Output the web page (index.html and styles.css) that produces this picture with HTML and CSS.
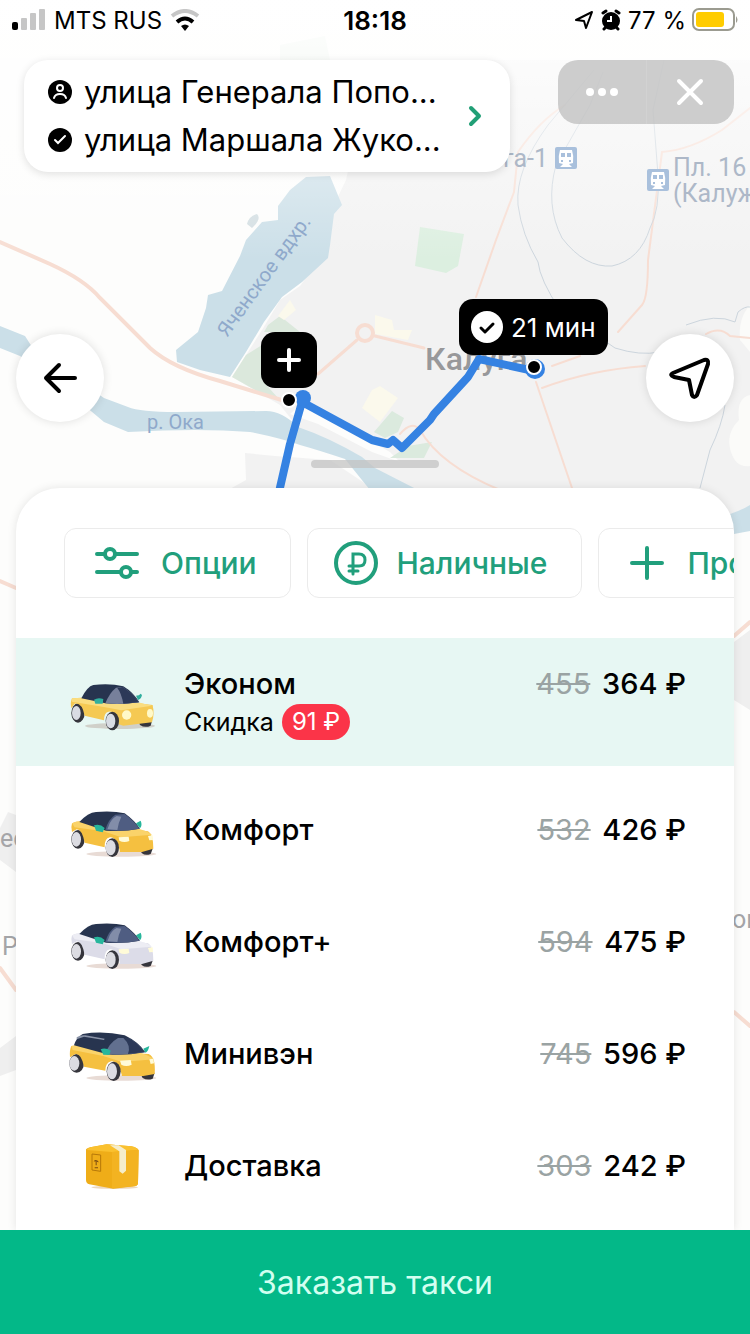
FILE: index.html
```html
<!DOCTYPE html>
<html lang="ru">
<head>
    <meta charset="UTF-8">
    <meta name="viewport" content="width=device-width, initial-scale=1.0">
    <title>Заказать такси</title>
    <link rel="stylesheet" href="styles.css">
</head>
<body>
    <div class="screen">
        <!-- Map -->
        <div class="map">
            <svg class="map-canvas" viewBox="0 0 750 1334" preserveAspectRatio="xMidYMin slice" aria-hidden="true">
                <defs>
                    <linearGradient id="topFade" x1="0" y1="0" x2="0" y2="1">
                        <stop offset="0" stop-color="#fff" stop-opacity="0.95"/>
                        <stop offset="0.5" stop-color="#fff" stop-opacity="0.5"/>
                        <stop offset="1" stop-color="#fff" stop-opacity="0"/>
                    </linearGradient>
                </defs>
                <rect width="750" height="1334" fill="#fdfdfc"/>
                <!-- city area -->
                <path fill="#f2f2f2" d="M372 60H750V508L730 514L700 500H398L370 470L340 448L300 430L280 405L232 377L262 330L280 300L300 286L328 248L334 205L346 180Z"/>
                <path fill="#f2f2f2" d="M245 453L275 456L330 460L375 490H228L246 480Z"/>
                <path fill="#fdfdfc" d="M300 405L330 418L390 452L400 462L372 452L318 424L290 414Z"/>
                <path fill="#fbfbf9" d="M750 305Q738 318 740 340Q750 352 750 352ZM750 395Q736 398 739 420Q725 434 731 452Q736 468 750 466Z"/>
                <!-- parks -->
                <path fill="#dcefe0" d="M420 227L464 234L458 266L446 273L415 266Z"/>
                <path fill="#dbe8dc" d="M232 377L246 355L262 345V380L278 398L262 394Z"/>
                <path fill="#dbe8dc" d="M268 325L280 316L300 332H264Z"/>
                <path fill="#fbf9ec" d="M290 300L296 310L284 320L278 316ZM375 315L392 320L394 330L412 330L408 340L375 334ZM372 390L380 386L398 398L380 422L362 408Z"/>
                <path fill="#dbeade" d="M392 411L404 418L398 432L385 438L374 432ZM408 446L432 442L424 458H390Z"/>
                <path fill="#eaf3ea" d="M280 45L325 36L330 60H280Z"/>
                <!-- reservoir -->
                <path fill="#cbdfe8" d="M306 177L330 176L342 205L334 214L330 245L328 258L302 282L282 297L264 322L246 352L230 377L200 370L177 362L176 350L198 332L206 308L208 295L222 291L240 256L246 240L262 222L278 220L278 206L290 190Z"/>
                <path fill="#d3dee2" d="M247 224Q249 216 257 214Q262 219 252 228Z"/>
                <!-- Oka river -->
                <path fill="#cbdfe8" d="M0 326L25 336L34 350L104 398L128 407Q140 412 176 412L266 411Q282 411 298 427Q330 438 362 457L375 468L418 490H370L345 459Q318 450 300 445Q280 438 250 432Q200 428 128 432L104 422L60 385L20 356L0 348Z"/>
                <path fill="#cbdfe8" d="M730 514Q742 510 750 505V531L734 534Z"/>
                <!-- roads -->
                <g fill="none" stroke="#f7ddd2" stroke-width="4" stroke-linecap="round">
                    <path d="M0 242L50 264Q85 280 100 298L150 348Q172 368 220 381L288 402"/>
                    <path stroke-width="3" d="M318 374L357 340M375 336L424 348"/>
                    <circle cx="365" cy="333" r="8"/>
                    <path stroke-width="2" d="M476 297L496 240L514 192L518 152Q540 120 565 105M536 382L572 488M542 388Q590 370 645 366M552 366L580 356M618 332L642 305Q648 298 648 260L662 152Q690 150 722 130L750 108M400 434Q412 420 420 430Q440 465 500 490M706 334Q720 326 730 336L750 338"/>
                    <path d="M0 581L16 588M734 636L750 622M734 1012L750 1026M0 968L16 990"/>
                </g>
                <!-- railways -->
                <g fill="none" stroke="#ccd5dd" stroke-width="1">
                    <path d="M594 70L548 125Q515 170 518 205Q522 235 538 262Q540 280 560 310L615 348Q640 356 660 352"/>
                    <path d="M603 72L590 105L556 165Q545 205 562 238Q585 268 612 266Q640 260 650 228Q660 210 658 175L653 110L664 60"/>
                    <path d="M725 405Q722 425 710 450L700 488M686 325Q716 313 735 322L738 312Q745 306 750 307"/>
                </g>
                <!-- outskirts seen beside the sheet -->
                <path fill="#efefef" d="M734 642L750 630V710L734 700ZM0 828L8 812L16 815V872L0 860ZM0 1048L16 1036V1070L0 1076Z"/>
                <rect width="750" height="260" fill="url(#topFade)"/>
                <g class="map-label">
                    <text x="503" y="167">га-1</text>
                    <text x="673" y="176">Пл. 16</text>
                    <text x="673" y="202">(Калуж</text>
                    <text class="water" transform="translate(227 338) rotate(-54)">Яченское вдхр.</text>
                    <text class="water" x="147" y="429">р. Ока</text>
                    <text class="city" x="425" y="370">Калуга</text>
                    <text class="place" x="0" y="847">ес</text>
                    <text class="place" x="2" y="955">Р</text>
                    <text class="place" x="732" y="928">ог</text>
                </g>
                <!-- train stations -->
                <g id="station">
                    <rect x="555" y="147" width="22" height="22" rx="2" fill="#a9c0dc"/>
                    <path fill="#fff" d="M560 150H572Q574 156 573 163L569 164L572 167H560L563 164L559 163Q558 156 560 150Z"/>
                    <path fill="#a9c0dc" d="M561 153H565V157H561ZM567 153H571V157H567ZM561 160H563V162H561ZM569 160H571V162H569Z"/>
                </g>
                <use href="#station" x="92" y="22"/>
                <!-- route -->
                <path fill="none" stroke="#3582e2" stroke-width="8" stroke-linejoin="round" d="M279 492L290 444L302 402L372 440L388 444L393 440L402 448L430 420L434 414L468 377L479 359L534 371"/>
                <circle cx="303" cy="398" r="8" fill="#3582e2"/>
                <circle cx="289" cy="400" r="7" fill="#000" stroke="#fff" stroke-width="2"/>
                <circle cx="535" cy="369" r="10" fill="#3582e2"/>
                <circle cx="534" cy="367" r="7" fill="#000" stroke="#fff" stroke-width="2"/>
            </svg>
            <button class="pin pin-add" aria-label="Добавить остановку">
                <svg width="24" height="24" viewBox="0 0 24 24"><path d="M12 2V22M2 12H22" stroke="#fff" stroke-width="4" stroke-linecap="round"/></svg>
            </button>
            <div class="pin pin-eta">
                <svg width="32" height="32" viewBox="0 0 32 32"><circle cx="16" cy="16" r="16" fill="#fff"/><path d="M10 17L14 21L22 13" fill="none" stroke="#000" stroke-width="3" stroke-linecap="round" stroke-linejoin="round"/></svg>
                <span>21 мин</span>
            </div>
        </div>

        <!-- Status bar -->
        <header class="status">
            <div class="status-left">
                <svg width="34" height="22" viewBox="0 0 34 22"><rect y="13" width="6" height="8" rx="2"/><g fill="#c6c6c6"><rect x="9" y="9" width="6" height="12" rx="1"/><rect x="18" y="4" width="6" height="17" rx="1"/><rect x="27" width="6" height="21" rx="1"/></g></svg>
                <span>MTS RUS</span>
                <svg width="30" height="22" viewBox="0 0 30 22" fill="none" stroke-width="4"><path d="M2 7Q15 -3 28 7" stroke="#c6c6c6"/><path d="M7 13Q15 6 23 13" stroke="#000"/><path d="M15 22L11 17Q15 14 19 17Z" fill="#000"/></svg>
            </div>
            <time class="status-time">18:18</time>
            <div class="status-right">
                <svg width="20" height="20" viewBox="0 0 20 20" fill="none" stroke="#000" stroke-width="2" stroke-linejoin="round"><path d="M2 10L18 2L12 18L10 11Z"/></svg>
                <svg width="22" height="22" viewBox="0 0 22 22"><circle cx="11" cy="12" r="9"/><path d="M3 4L6 2M19 4L16 2M6 18L4 20M16 18L18 20" stroke="#000" stroke-width="3" stroke-linecap="round"/><path d="M11 7V12H7" fill="none" stroke="#fff" stroke-width="2"/></svg>
                <span>77 %</span>
                <svg width="46" height="24" viewBox="0 0 46 24"><rect x="1" y="1" width="41" height="21" rx="6" fill="#fff" stroke="#9b9b90" stroke-width="2"/><rect x="4" y="4" width="28" height="15" rx="3" fill="#fc0"/><path d="M44 8Q47 12 44 15Z" fill="#9b9b90"/></svg>
            </div>
        </header>

        <div class="topbar">
            <button class="route">
                <span class="route-list">
                    <span class="route-item">
                        <svg width="24" height="24" viewBox="0 0 24 24"><circle cx="12" cy="12" r="12"/><g fill="none" stroke="#fff" stroke-width="2" stroke-linecap="round"><circle cx="12" cy="8" r="3"/><path d="M6 18Q7 14 12 14Q17 14 18 18"/></g></svg>
                        <span>улица Генерала Попо...</span>
                    </span>
                    <span class="route-item">
                        <svg width="24" height="24" viewBox="0 0 24 24"><circle cx="12" cy="12" r="12"/><path d="M7 12L10 15L17 8" fill="none" stroke="#fff" stroke-width="2" stroke-linecap="round"/></svg>
                        <span>улица Маршала Жуко...</span>
                    </span>
                </span>
                <svg width="14" height="22" viewBox="0 0 14 22"><path d="M3 3L11 11L3 19" fill="none" stroke="#219f76" stroke-width="4" stroke-linecap="round" stroke-linejoin="round"/></svg>
            </button>
            <div class="capsule">
                <button aria-label="Ещё"><svg width="34" height="10" viewBox="0 0 34 10" fill="#fff"><circle cx="5" cy="5" r="4"/><circle cx="17" cy="5" r="4"/><circle cx="29" cy="5" r="4"/></svg></button>
                <button aria-label="Закрыть"><svg width="28" height="28" viewBox="0 0 28 28"><path d="M3 3L25 25M25 3L3 25" stroke="#fff" stroke-width="4" stroke-linecap="round"/></svg></button>
            </div>
        </div>

        <div class="map-controls">
            <button class="round" aria-label="Назад">
                <svg width="36" height="32" viewBox="0 0 36 32"><path d="M33 16H4M17 3L4 16L17 29" fill="none" stroke="#000" stroke-width="4" stroke-linecap="round" stroke-linejoin="round"/></svg>
            </button>
            <button class="round" aria-label="Моё местоположение">
                <svg width="44" height="44" viewBox="0 0 44 44"><path d="M5 17Q1 19 6 21L21 24L24 39Q26 43 29 39L40 8Q41 3 36 4Z" fill="none" stroke="#000" stroke-width="4" stroke-linejoin="round"/></svg>
            </button>
        </div>

        <div class="handle"></div>

        <!-- Bottom sheet -->
        <main class="sheet">
            <div class="chips">
                <button class="chip">
                    <svg width="52" height="44" viewBox="0 0 52 44"><path d="M6 13H14M24 13H46M6 31H30M40 31H46"/><circle cx="19" cy="13" r="5"/><circle cx="35" cy="31" r="5"/></svg>
                    Опции
                </button>
                <button class="chip">
                    <svg width="44" height="44" viewBox="0 0 44 44"><circle cx="22" cy="22" r="20"/><path stroke-width="3" d="M19 33V13H25Q31 13 31 19Q31 25 25 25H15M15 30H24"/></svg>
                    Наличные
                </button>
                <button class="chip">
                    <svg width="44" height="44" viewBox="0 0 44 44"><path d="M22 7V37M7 22H37"/></svg>
                    Промокод
                </button>
            </div>

            <ul class="tariffs">
                <li>
                    <button class="tariff selected">
                        <svg class="pic" viewBox="0 6 330 180">
                            <ellipse cx="180" cy="165" rx="105" ry="9" fill="#b9aaa0" opacity="0.5"/>
                            <ellipse cx="54" cy="126" rx="20" ry="29" fill="#35353c"/>
                            <path d="M235 150H276L272 164Q255 172 240 162Z" fill="#35353c"/>
                            <path fill="#f5c953" d="M36 82L68 80L210 94L278 102Q284 130 276 154L190 164L176 160Q168 118 146 122Q132 124 132 148L74 134Q66 94 44 98L34 112Q30 94 36 82Z"/>
                            <path fill="#fadd80" d="M36 82L68 80L136 94L240 95L276 104L184 118L132 108L36 92Z"/>
                            <path fill="#27344f" d="M64 82Q82 46 100 42Q150 36 190 46Q220 64 238 94Q180 102 136 97Z"/>
                            <path fill="#77809b" d="M136 97Q148 66 168 50L188 48Q218 66 236 94Q180 102 136 97Z"/>
                            <path fill="#2c3958" d="M172 51L188 48Q218 66 236 94L190 98Q184 66 172 51Z"/>
                            <path fill="#31af9e" d="M102 86Q114 78 130 84L128 98H106ZM228 74Q238 74 242 68L246 72Q244 84 234 87Z"/>
                            <ellipse cx="157" cy="150" rx="20" ry="28" fill="#35353c"/>
                            <ellipse cx="49" cy="126" rx="13" ry="21" fill="#d9dce3"/><ellipse cx="152" cy="150" rx="14" ry="22" fill="#d9dce3"/>
                            <circle cx="200" cy="132" r="14" fill="#fff9c8"/><ellipse cx="270" cy="127" rx="9" ry="13" fill="#fff9c8"/>
                        </svg>
                        <span class="info">
                            <span class="name">Эконом</span>
                            <span class="discount">Скидка <span class="badge">91 ₽</span></span>
                        </span>
                        <span class="price"><s>455</s> 364 ₽</span>
                    </button>
                </li>
                <li>
                    <button class="tariff">
                        <svg class="pic yellow" viewBox="0 0 330 180">
                            <g id="sedan">
                                <ellipse cx="184" cy="162" rx="105" ry="8" fill="#c5a696" opacity="0.4"/>
                                <ellipse cx="54" cy="118" rx="20" ry="28" fill="#35353c"/>
                                <path d="M236 146H278L272 162Q256 168 246 160Z" fill="#35353c"/>
                                <path class="body" d="M36 70Q50 62 70 64L200 86L264 94Q280 102 280 146L246 156H180Q170 110 150 112Q132 116 134 142L74 128Q66 88 50 88L36 96Q32 82 36 70Z"/>
                                <path class="hood" d="M36 70Q50 62 70 64L140 86L236 86Q266 94 276 104L184 112L130 94L44 82Z"/>
                                <path fill="#27344f" d="M58 66Q84 38 108 36Q160 32 194 40Q224 62 240 86Q190 96 138 92Z"/>
                                <path fill="#4f5d82" d="M136 90Q144 58 166 44L194 42Q222 62 238 86Q190 96 136 90Z"/>
                                <path fill="#828da9" d="M146 78Q152 58 170 48L184 50Q174 70 172 90L142 88Z"/>
                                <path fill="#27b69c" d="M102 76Q120 70 134 84L128 97L108 92ZM228 70L242 62Q248 76 240 85Z"/>
                                <ellipse cx="157" cy="143" rx="20" ry="28" fill="#35353c"/>
                                <ellipse cx="49" cy="118" rx="14" ry="22" fill="#dcdce2"/><ellipse cx="152" cy="143" rx="15" ry="23" fill="#dcdce2"/>
                                <path fill="#fffbd8" d="M176 112L206 110L208 123Q192 130 178 122ZM264 108L278 106L279 120L268 121Z"/>
                            </g>
                        </svg>
                        <span class="name">Комфорт</span>
                        <span class="price"><s>532</s> 426 ₽</span>
                    </button>
                </li>
                <li>
                    <button class="tariff">
                        <svg class="pic white" viewBox="0 0 330 180"><use href="#sedan"/></svg>
                        <span class="name">Комфорт+</span>
                        <span class="price"><s>594</s> 475 ₽</span>
                    </button>
                </li>
                <li>
                    <button class="tariff">
                        <svg class="pic yellow" viewBox="0 12 330 180">
                            <ellipse cx="184" cy="174" rx="105" ry="8" fill="#c5a696" opacity="0.4"/>
                            <ellipse cx="50" cy="130" rx="22" ry="28" fill="#35353c"/>
                            <path d="M240 158H284L278 176Q262 182 248 174Z" fill="#35353c"/>
                            <path class="body" d="M34 78L60 74L200 98L266 102Q288 112 284 162L250 168H186Q176 124 154 124Q136 128 136 152L72 140Q64 100 46 102L30 112Q28 90 34 78Z"/>
                            <path class="hood" d="M34 78L60 74L140 100L240 98Q268 106 282 118L186 126L130 108L38 90Z"/>
                            <path fill="#27344f" d="M42 76Q48 54 68 42Q130 32 194 46Q236 66 256 97Q190 108 142 103Z"/>
                            <path fill="#62708f" d="M136 102Q146 70 174 54L206 54Q236 72 254 96Q190 108 136 102Z"/>
                            <path fill="#2c3958" d="M190 54L206 54Q236 72 254 96L204 102Q214 76 190 54Z"/>
                            <path fill="#8b94a8" d="M50 52Q62 44 76 46L134 56L132 60L72 50L50 58Z"/>
                            <path fill="#27b69c" d="M122 88Q136 82 152 92L148 105L130 104ZM250 86L268 78Q264 96 256 98Z"/>
                            <ellipse cx="161" cy="154" rx="21" ry="29" fill="#35353c"/>
                            <ellipse cx="43" cy="130" rx="15" ry="22" fill="#dcdce2"/><ellipse cx="156" cy="154" rx="15" ry="24" fill="#dcdce2"/>
                            <path fill="#fffbd8" d="M180 122L212 120L215 134Q198 142 184 134ZM268 118L280 116L282 130L272 132Z"/>
                        </svg>
                        <span class="name">Минивэн</span>
                        <span class="price"><s>745</s> 596 ₽</span>
                    </button>
                </li>
                <li>
                    <button class="tariff">
                        <svg class="pic" viewBox="0 18 330 180">
                            <ellipse cx="164" cy="172" rx="70" ry="5" fill="#cf9b5a" opacity="0.4"/>
                            <path fill="#efad18" d="M78 62Q76 56 90 52L140 43L214 49Q236 54 236 62L234 158Q234 168 222 169L160 176L88 163Q78 160 78 150Z"/>
                            <path fill="#fac12f" d="M80 60Q84 54 92 52L140 43L214 49Q232 52 234 60L156 66Z"/>
                            <path fill="#f3b321" d="M156 66L236 60L234 158Q234 168 222 169L156 175Z"/>
                            <path fill="#f5edcb" d="M150 46L176 46L198 60V122L188 131L178 124V64Z"/>
                            <path fill="none" stroke="#b67809" stroke-width="3" d="M96 72L122 75V124L96 120Z"/>
                            <path fill="#7a4c12" d="M101 94Q108 84 117 97ZM107 96H110V106H107ZM104 112H114V115H104Z"/>
                        </svg>
                        <span class="name">Доставка</span>
                        <span class="price"><s>303</s> 242 ₽</span>
                    </button>
                </li>
            </ul>
        </main>

        <button class="order">Заказать такси</button>
    </div>
</body>
</html>
```
FILE: styles.css
```css
* {
    box-sizing: border-box;
}

body {
    margin: 0;
    font-family: Inter, "Liberation Sans", sans-serif;
    color: #000;
    background: #fdfdfc;
}

button {
    font: inherit;
    color: inherit;
    border: none;
    background: none;
    padding: 0;
    margin: 0;
    cursor: pointer;
}

svg {
    display: block;
    flex-shrink: 0;
}

.screen {
    position: relative;
    min-height: 100vh;
    display: flex;
    flex-direction: column;
    overflow: hidden;
}

/* Map lies under everything */
.map {
    position: absolute;
    inset: 0;
}

.map-canvas {
    width: 100%;
    height: 100%;
}

.map-label {
    font-family: Roboto, sans-serif;
    font-size: 25px;
    fill: #adb8c8;
}

.map-label .water {
    font-size: 20px;
    fill: #8fa9cb;
}

.map-label .city {
    font-size: 32px;
    font-weight: 500;
    fill: #98989a;
}

.map-label .place {
    fill: #a5a5a8;
}

.pin {
    position: absolute;
    display: flex;
    align-items: center;
    justify-content: center;
    height: 56px;
    border-radius: 14px;
    background: #000;
    color: #fff;
    font-size: 26px;
}

.pin-add {
    left: calc(50% - 114px);
    top: 332px;
    width: 56px;
}

.pin-eta {
    left: calc(50% + 84px);
    top: 299px;
    gap: 8px;
    padding: 0 12px;
}

/* Status bar */
.status {
    position: relative;
    display: grid;
    grid-template-columns: 1fr auto 1fr;
    align-items: center;
    height: 40px;
    padding: 0 12px;
    font-size: 24px;
}

.status-left,
.status-right {
    display: flex;
    align-items: center;
    gap: 8px;
}

.status-right {
    justify-content: flex-end;
    gap: 6px;
}

.status-time {
    font-size: 26px;
    font-weight: 600;
}

/* Address card and window buttons */
.topbar {
    position: relative;
    display: flex;
    align-items: flex-start;
    justify-content: space-between;
    gap: 48px;
    padding: 20px 16px 0 24px;
}

.route {
    flex: 1;
    display: flex;
    align-items: center;
    justify-content: space-between;
    padding: 8px 28px 8px 24px;
    border-radius: 24px;
    background: #fff;
    box-shadow: 0 2px 8px rgba(0, 0, 0, 0.12);
    font-size: 31px;
    text-align: left;
}

.route-item {
    display: flex;
    align-items: center;
    gap: 12px;
    line-height: 48px;
    white-space: nowrap;
}

.capsule {
    display: flex;
    width: 176px;
    height: 64px;
    border-radius: 20px;
    background: rgba(190, 190, 190, 0.75);
}

.capsule button {
    flex: 1;
    display: flex;
    align-items: center;
    justify-content: center;
}

.capsule button + button {
    border-left: 1px solid #d2d2d2;
}

.map-controls {
    position: relative;
    display: flex;
    justify-content: space-between;
    margin-top: 162px;
    padding: 0 16px;
}

.round {
    display: flex;
    align-items: center;
    justify-content: center;
    width: 88px;
    height: 88px;
    border-radius: 50%;
    background: #fff;
    box-shadow: 0 0 10px rgba(0, 0, 0, 0.12);
}

.handle {
    position: relative;
    align-self: center;
    width: 128px;
    height: 8px;
    margin: 38px 0 20px;
    border-radius: 4px;
    background: rgba(195, 195, 195, 0.75);
}

/* Bottom sheet */
.sheet {
    position: relative;
    flex: 1;
    margin: 0 16px;
    padding-top: 40px;
    border-radius: 44px 44px 0 0;
    background: #fff;
    box-shadow: 0 0 10px rgba(0, 0, 0, 0.1);
    overflow: hidden;
}

.chips {
    display: flex;
    gap: 16px;
    padding-left: 48px;
    margin-bottom: 40px;
    overflow: hidden;
}

.chip {
    display: flex;
    flex-shrink: 0;
    align-items: center;
    gap: 18px;
    height: 70px;
    padding: 0 34px 0 26px;
    border: 1px solid #ebebeb;
    border-radius: 12px;
    color: #219f7c;
    font-size: 30px;
    font-weight: 500;
}

.chip svg {
    fill: none;
    stroke: #219f7c;
    stroke-width: 4;
    stroke-linecap: round;
}

.tariffs {
    list-style: none;
    margin: 0;
    padding: 0 0 8px;
}

.tariff {
    display: flex;
    align-items: center;
    gap: 14px;
    width: 100%;
    min-height: 112px;
    padding: 0 48px 0 44px;
    font-size: 29px;
    font-weight: 500;
    line-height: 36px;
    text-align: left;
}

.tariff.selected {
    align-items: flex-start;
    margin-bottom: 8px;
    padding-top: 28px;
    padding-bottom: 26px;
    background: #e7f7f3;
}

.pic {
    width: 110px;
    height: 60px;
    align-self: center;
}

.yellow {
    --body: #f5c040;
    --hood: #fad36a;
}

.white {
    --body: #dcdce8;
    --hood: #ededf4;
}

.body {
    fill: var(--body);
}

.hood {
    fill: var(--hood);
}

.info {
    display: flex;
    flex-direction: column;
    gap: 2px;
}

.discount {
    display: flex;
    align-items: center;
    gap: 8px;
    font-size: 25px;
    font-weight: 400;
}

.badge {
    padding: 0 10px;
    border-radius: 18px;
    background: #fb3448;
    color: #fff;
    font-size: 24px;
}

.price {
    margin-left: auto;
    white-space: nowrap;
}

.price s {
    margin-right: 4px;
    color: #9aa3a3;
    font-weight: 400;
}

.order {
    position: relative;
    height: 104px;
    background: #03b888;
    color: #d2fff0;
    font-size: 32px;
}
```
